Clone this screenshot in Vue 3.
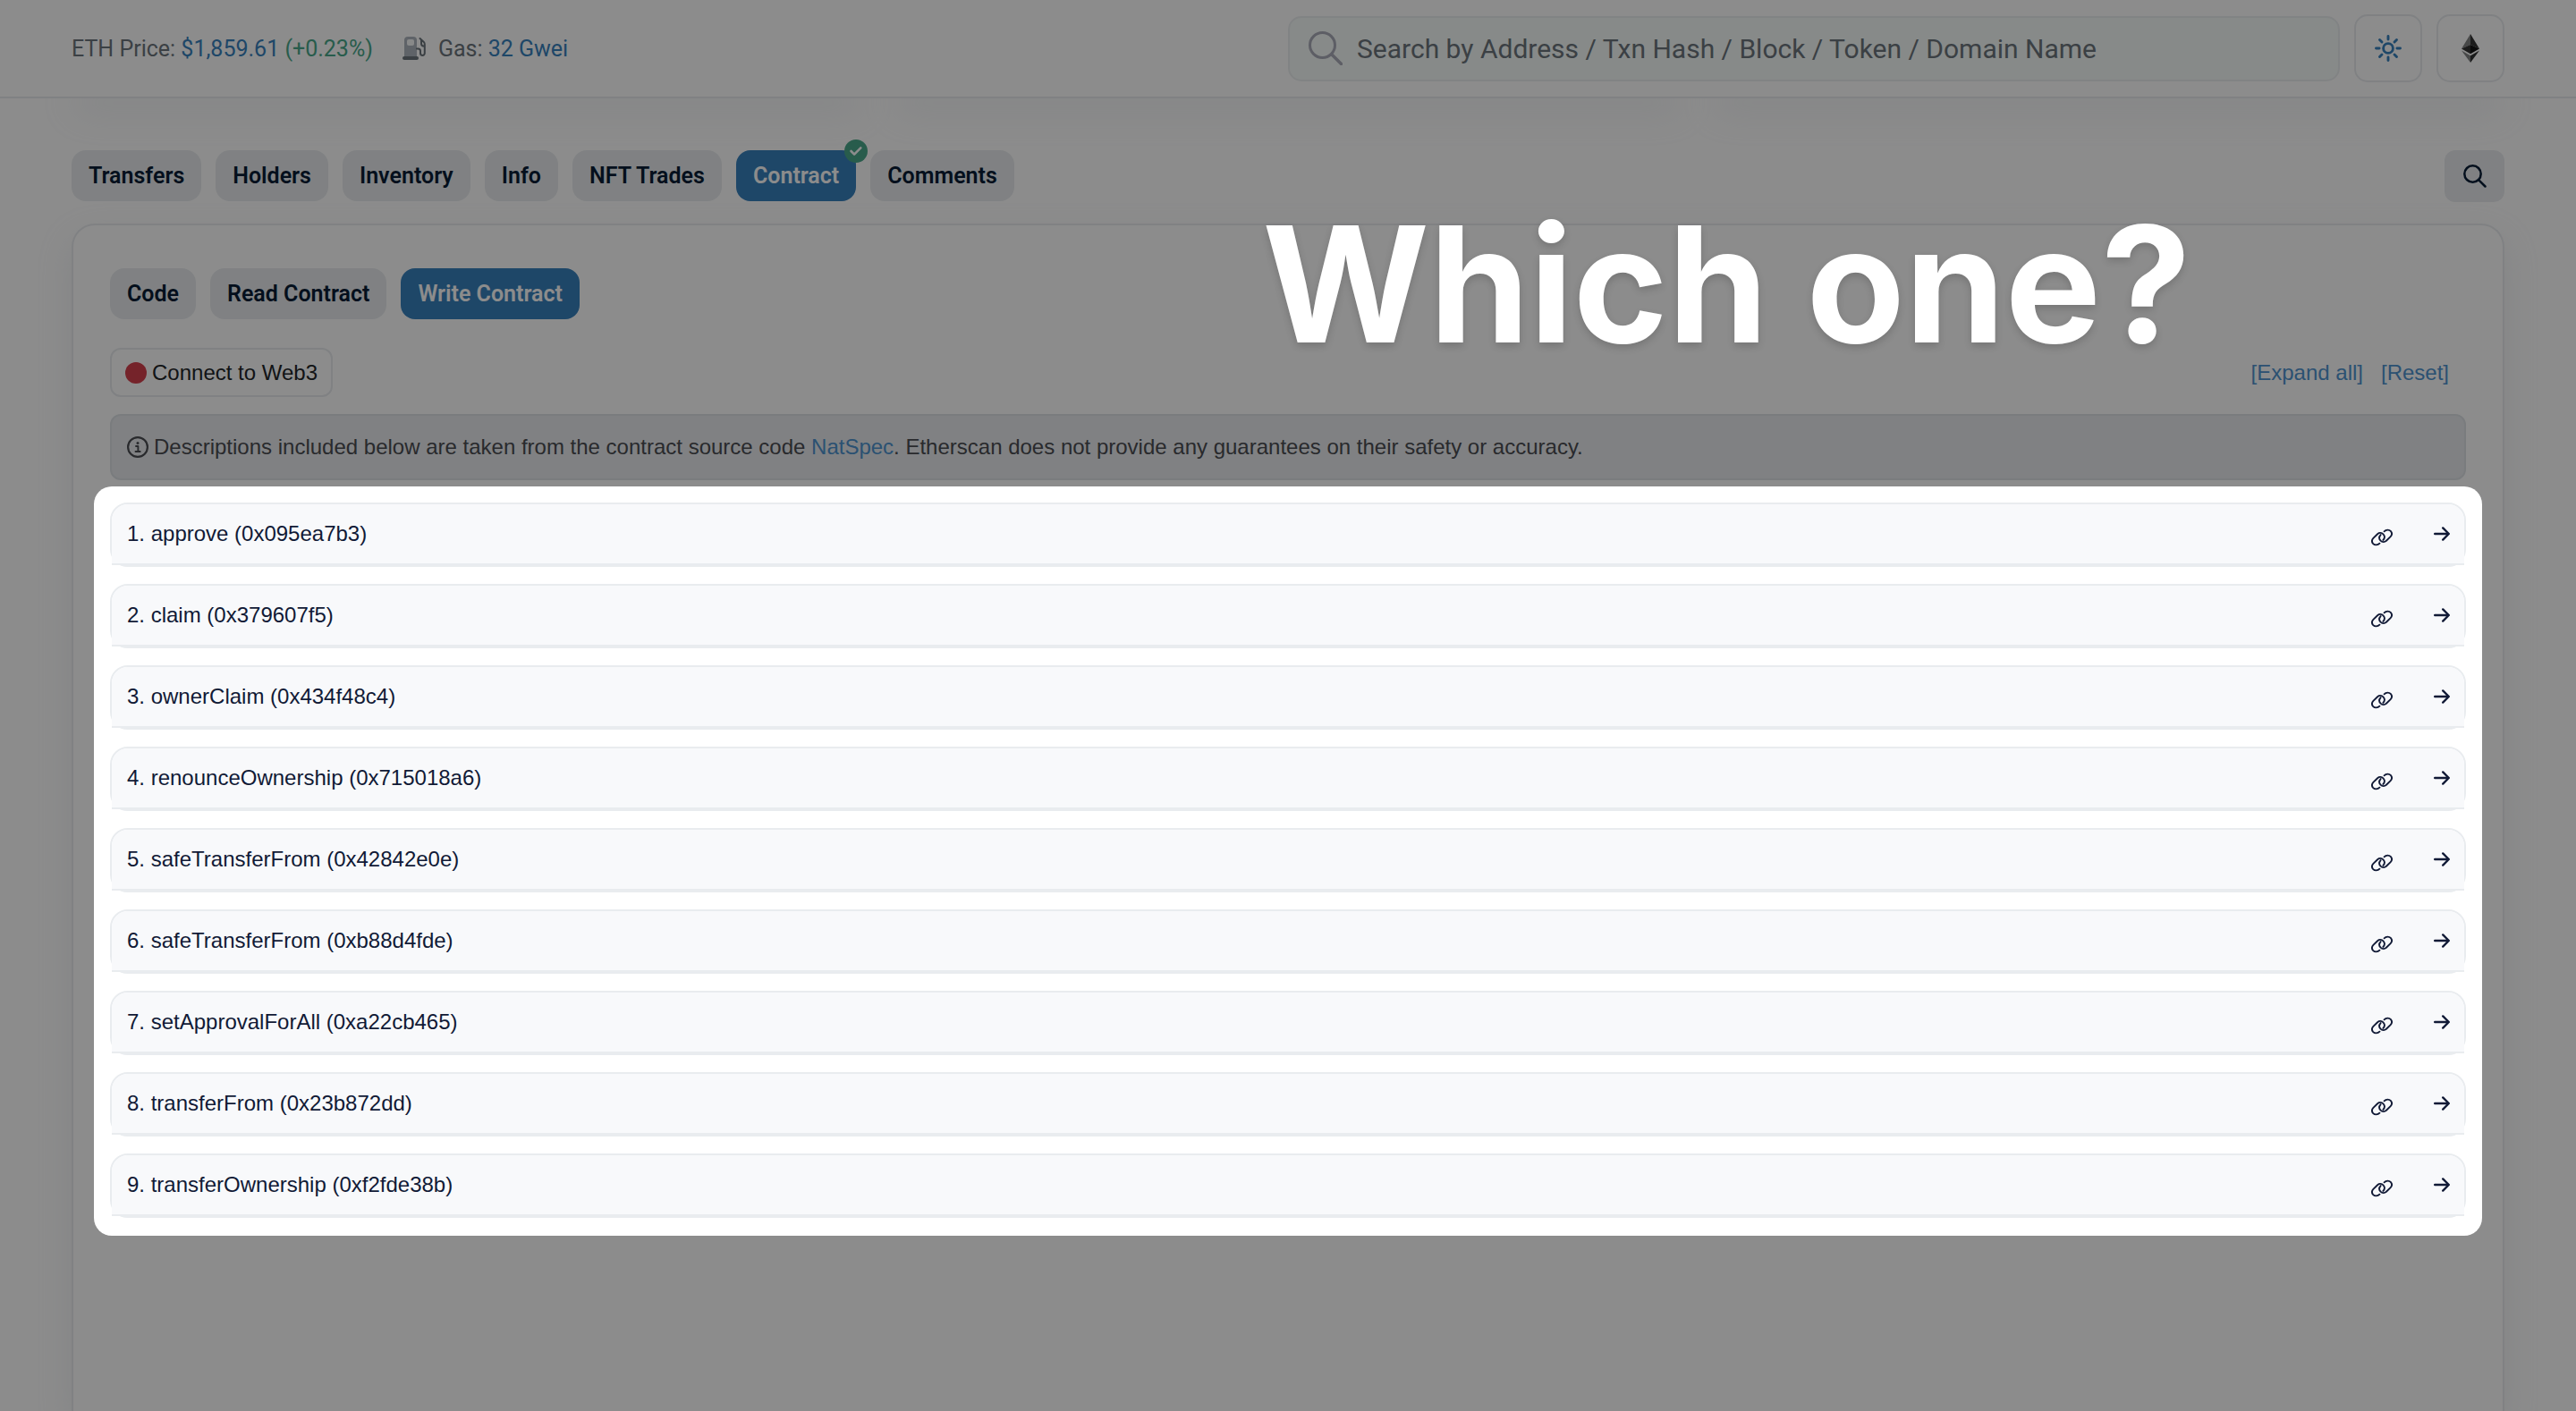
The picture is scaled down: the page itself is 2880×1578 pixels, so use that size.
<script setup>
import { ref } from 'vue'

const query = ref('')
const pageTabs = ['Transfers', 'Holders', 'Inventory', 'Info', 'NFT Trades', 'Contract', 'Comments']
const activePageTab = ref('Contract')
const contractTabs = ['Code', 'Read Contract', 'Write Contract']
const activeContractTab = ref('Write Contract')

const methods = [
  { name: 'approve', selector: '0x095ea7b3' },
  { name: 'claim', selector: '0x379607f5' },
  { name: 'ownerClaim', selector: '0x434f48c4' },
  { name: 'renounceOwnership', selector: '0x715018a6' },
  { name: 'safeTransferFrom', selector: '0x42842e0e' },
  { name: 'safeTransferFrom', selector: '0xb88d4fde' },
  { name: 'setApprovalForAll', selector: '0xa22cb465' },
  { name: 'transferFrom', selector: '0x23b872dd' },
  { name: 'transferOwnership', selector: '0xf2fde38b' }
]
</script>

<template>
  <div class="page">
    <header class="topbar">
      <div class="stats">
        <span>ETH Price: <a href="#price">$1,859.61</a> <a href="#price" class="up">(+0.23%)</a></span>
        <span class="gas">
          <svg width="26" height="26" viewBox="0 0 26 26" aria-hidden="true">
            <path d="M2 4a4 4 0 0 1 4-4h6a4 4 0 0 1 4 4v19H2z" fill="#adb5bd" />
            <rect x="5" y="3" width="8" height="7" rx="2" fill="#f8f9fa" />
            <rect x="0" y="22" width="18" height="4" rx="2" fill="#6c757d" />
            <path d="M16 13.500h1.500c1.500 0 2.500 1 2.500 2.500v2.500a2.400 2.400 0 0 0 4.800 0V8.500c0-1-.3-1.900-1-2.600L19.500 2M21 4v4c0 1.500 1 2.700 3.500 2.800" fill="none" stroke="#6c757d" stroke-width="2" stroke-linecap="round" />
          </svg>
          <span>Gas: <a href="#gas">32 Gwei</a></span>
        </span>
      </div>
      <div class="tools">
        <label class="search">
          <svg width="38" height="38" viewBox="0 0 38 38" aria-hidden="true">
            <circle cx="15.500" cy="15.500" r="14" fill="none" stroke="#a9abb8" stroke-width="3" />
            <path d="M26 26l10.500 10.500" stroke="#a9abb8" stroke-width="3.400" stroke-linecap="round" />
          </svg>
          <input v-model="query" type="text" aria-label="Search" placeholder="Search by Address / Txn Hash / Block / Token / Domain Name" />
        </label>
        <button type="button" class="square" aria-label="Theme">
          <svg width="30" height="30" viewBox="0 0 30 30" fill="none" stroke="#3881bd" stroke-width="2.900" stroke-linecap="round" aria-hidden="true">
            <circle cx="15" cy="15" r="5.400" />
            <path d="M15 1.500v3.600M15 24.900v3.600M1.500 15h3.600M24.900 15h3.600M5.500 5.500l2.500 2.500M22 22l2.500 2.500M5.500 24.500l2.500-2.500M22 8l2.500-2.500" />
          </svg>
        </button>
        <button type="button" class="square" aria-label="Network">
          <svg width="20" height="32" viewBox="0 0 20 32" aria-hidden="true">
            <path d="M10 0L0 16.500l10-4.600z" fill="#828384" />
            <path d="M10 0l10 16.500-10-4.600z" fill="#343434" />
            <path d="M0 16.500l10-4.600v10.400z" fill="#343434" />
            <path d="M20 16.500l-10-4.600v10.400z" fill="#131313" />
            <path d="M0 18.500l10 5.800V32z" fill="#828384" />
            <path d="M20 18.500l-10 5.800V32z" fill="#2f3030" />
          </svg>
        </button>
      </div>
    </header>

    <div class="summary" aria-hidden="true">
      <div v-for="n in 3" :key="n" class="summary-card"></div>
    </div>

    <nav class="page-tabs">
      <div class="tabs">
        <button v-for="tab in pageTabs" :key="tab" type="button" class="tab" :class="{ active: tab === activePageTab }" @click="activePageTab = tab">
          {{ tab }}
          <svg v-if="tab === 'Contract'" class="badge" width="26" height="26" viewBox="0 0 26 26" aria-hidden="true">
            <circle cx="13" cy="13" r="13" fill="#49a88a" />
            <path d="M7.500 13l3.600 3.600 7.200-7.200" fill="none" stroke="#fff" stroke-width="2.600" stroke-linecap="round" stroke-linejoin="round" />
          </svg>
        </button>
      </div>
      <button type="button" class="find" aria-label="Find">
        <svg width="26" height="26" viewBox="0 0 26 26" fill="none" stroke="#081d35" stroke-width="2.500" stroke-linecap="round" aria-hidden="true">
          <circle cx="10.500" cy="10.500" r="9.200" />
          <path d="M17.300 17.300l7.200 7.200" />
        </svg>
      </button>
    </nav>

    <main class="panel">
      <div class="tabs">
        <button v-for="tab in contractTabs" :key="tab" type="button" class="tab" :class="{ active: tab === activeContractTab }" @click="activeContractTab = tab">{{ tab }}</button>
      </div>

      <div class="connect-row">
        <button type="button" class="connect"><span class="dot"></span>Connect to Web3</button>
        <div class="actions">
          <a href="#expand">[Expand all]</a>
          <a href="#reset">[Reset]</a>
        </div>
      </div>

      <p class="notice">
        <svg width="24" height="24" viewBox="0 0 24 24" aria-hidden="true">
          <circle cx="12" cy="12" r="10.900" fill="none" stroke="#4b4d52" stroke-width="2.200" />
          <circle cx="12" cy="7.400" r="1.500" fill="#4b4d52" />
          <path d="M10 11h2.400v6M9.500 17h5.200" fill="none" stroke="#4b4d52" stroke-width="1.900" stroke-linecap="round" stroke-linejoin="round" />
        </svg>
        <span>Descriptions included below are taken from the contract source code <a href="#natspec">NatSpec</a>. Etherscan does not provide any guarantees on their safety or accuracy.</span>
      </p>

      <section class="spotlight">
        <article v-for="(method, i) in methods" :key="method.selector" class="method">
          <div class="method-head">
            <span>{{ i + 1 }}. {{ method.name }} ({{ method.selector }})</span>
            <span class="method-icons">
              <a :href="'#F' + (i + 1)" class="permalink" aria-label="Copy permalink">
                <svg width="24" height="20" viewBox="0 0 24.400 19.200" fill="none" stroke="#111a36" stroke-width="1.900" stroke-linecap="round" aria-hidden="true">
                  <path d="M9.600 16.400C7.400 18.800 4 18.600 2.300 16.800C.6 14.900.7 12.300 2.400 10.500L7.200 5.800C9.200 4 12 4.200 13.700 5.900C15.600 7.900 15.400 10.600 13.600 12.600" />
                  <path d="M14.800 2.800C17 .4 20.400.6 22.100 2.400C23.800 4.300 23.700 6.900 22 8.700L17.200 13.400C15.200 15.200 12.400 15 10.700 13.300C8.800 11.300 9 8.600 10.800 6.600" />
                </svg>
              </a>
              <button type="button" class="toggle" aria-label="Expand">
                <svg width="18" height="16" viewBox="0 0 18 16" fill="none" stroke="#111a36" stroke-width="2.400" stroke-linecap="round" stroke-linejoin="round" aria-hidden="true">
                  <path d="M1.200 8h15.400M10.200 1.400L16.800 8l-6.600 6.600" />
                </svg>
              </button>
            </span>
          </div>
        </article>
      </section>
    </main>

    <h1 class="callout">Which one?</h1>
  </div>
</template>

<style>
body {
  margin: 0;
  background: #fff;
}
</style>

<style scoped>
.page {
  position: relative;
  display: flex;
  flex-direction: column;
  min-height: 100vh;
  overflow: hidden;
  background: #fff;
  font-family: Roboto, sans-serif;
  font-size: 25px;
}
* {
  box-sizing: border-box;
}
svg {
  display: block;
  flex: none;
}
a {
  color: #3881bd;
  text-decoration: none;
}
button {
  margin: 0;
  padding: 0;
  font: inherit;
  cursor: pointer;
}
.topbar {
  position: relative;
  z-index: 1;
  display: flex;
  justify-content: space-between;
  align-items: center;
  height: 110px;
  padding: 0 80px;
  border-bottom: 2px solid #e9ecef;
  background: #fff;
}
.stats,
.gas,
.tools {
  display: flex;
  align-items: center;
}
.stats {
  gap: 33px;
  color: #6c757d;
}
.gas {
  gap: 14px;
}
.up {
  color: #49a88a;
}
.tools {
  gap: 16px;
  width: 50%;
}
.search {
  display: flex;
  flex: 1;
  align-items: center;
  gap: 16px;
  height: 73px;
  padding: 0 21px;
  border: 2px solid #eceff0;
  border-radius: 15px;
  background: #f6fbf9;
}
.search input {
  flex: 1;
  min-width: 0;
  padding: 0;
  border: 0;
  outline: 0;
  background: none;
  color: #212529;
  font: 30px Roboto, sans-serif;
}
.search input::placeholder {
  color: #6c757d;
  opacity: 1;
}
.square {
  display: flex;
  align-items: center;
  justify-content: center;
  width: 76px;
  height: 76px;
  border: 2px solid #e9ecef;
  border-radius: 15px;
  background: #fff;
}
.summary {
  display: flex;
  gap: 30px;
  height: 20px;
  margin: -20px 80px 0;
}
.summary-card {
  flex: 1;
  border-radius: 0 0 20px 20px;
  box-shadow: 0 15px 36px rgba(189, 197, 209, 0.25);
}
.page-tabs {
  position: relative;
  display: flex;
  justify-content: space-between;
  margin: 58px 80px 24px;
}
.tabs {
  display: flex;
  gap: 16px;
}
.tab {
  position: relative;
  height: 57px;
  padding: 0 19px;
  border: 0;
  border-radius: 16px;
  background: #e9ecef;
  color: #081d35;
  font-size: 25px;
  font-weight: 600;
}
.tab.active {
  background: #3881bd;
  color: #fff;
}
.badge {
  position: absolute;
  top: -12px;
  right: -13px;
}
.find {
  display: flex;
  align-items: center;
  justify-content: center;
  width: 67px;
  height: 58px;
  border: 0;
  border-radius: 12px;
  background: #e9ecef;
}
.panel {
  flex: 1;
  margin: 0 80px;
  padding: 48px 41px 0;
  border: 2px solid #e9ecef;
  border-bottom: 0;
  border-radius: 26px 26px 0 0;
  background: #fff;
  box-shadow: 0 15px 36px rgba(189, 197, 209, 0.25);
  font-family: "Liberation Sans", Arial, sans-serif;
  font-size: 24px;
}
.panel .tab {
  font-family: Roboto, sans-serif;
}
.connect-row {
  display: flex;
  justify-content: space-between;
  align-items: center;
  margin-top: 32px;
}
.connect {
  display: flex;
  align-items: center;
  gap: 6px;
  height: 55px;
  padding: 0 15px;
  border: 2px solid #e9ecef;
  border-radius: 12px;
  background: #fff;
  color: #212529;
}
.dot {
  width: 24px;
  height: 24px;
  border-radius: 50%;
  background: #d5414e;
}
.actions {
  display: flex;
  gap: 20px;
  margin-right: 19px;
}
.panel .actions a,
.notice a {
  color: #4f94d0;
}
.notice {
  display: flex;
  align-items: center;
  gap: 6px;
  height: 74px;
  margin: 19px 0 7px;
  padding: 0 17px;
  border: 2px solid #dee2e6;
  border-radius: 12px;
  background: #e9ecef;
  color: #4b4d52;
}
/* The shadow spread dims everything around the highlighted list. */
.spotlight {
  position: relative;
  z-index: 2;
  display: flex;
  flex-direction: column;
  gap: 19px;
  margin: 0 -18px;
  padding: 18px 18px 20px;
  border-radius: 20px;
  background: #fff;
  box-shadow: 0 0 0 200vmax rgba(0, 0, 0, 0.45);
}
.method {
  border: 2px solid #e9ecef;
  border-radius: 20px;
}
.method-head {
  display: flex;
  justify-content: space-between;
  align-items: center;
  height: 68px;
  padding: 0 16px 0 17px;
  border-bottom: 2px solid #e9ecef;
  border-radius: 18px 18px 0 0;
  background: #f8f9fb;
  color: #111a36;
}
.method-icons {
  display: flex;
  align-items: center;
  gap: 46px;
}
.permalink {
  padding-top: 8px;
}
.toggle {
  border: 0;
  background: none;
}
.callout {
  position: absolute;
  z-index: 3;
  top: 206px;
  left: 49%;
  margin: 0;
  color: #fff;
  font-family: Inter, sans-serif;
  font-size: 180px;
  font-weight: 700;
  line-height: 224px;
  white-space: nowrap;
  text-shadow: 0 4px 8px rgba(0, 0, 0, 0.16);
}
</style>
